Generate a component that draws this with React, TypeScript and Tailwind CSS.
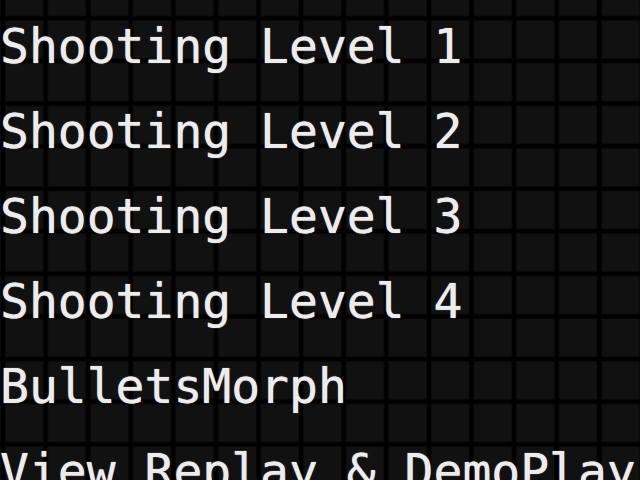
const ITEMS = [
  "Shooting Level 1",
  "Shooting Level 2",
  "Shooting Level 3",
  "Shooting Level 4",
  "BulletsMorph",
  "View Replay & DemoPlay",
];

export default function App() {
  return (
    <div className="w-[640px] h-[480px] overflow-hidden bg-[#111111] bg-[linear-gradient(to_right,transparent_0,#000_1.5px,#000_4.5px,transparent_6px),linear-gradient(to_bottom,transparent_0,#000_1.5px,#000_4.5px,transparent_6px)] bg-[size:42.6px_42.6px] bg-[position:0px_15.3px]">
      <ul className="flex flex-col pt-1 font-['DejaVu_Sans_Mono',monospace] text-[48px] leading-[85px] text-[#ececec] [text-shadow:0_0_1px_#ececec]">
        {ITEMS.map((item) => (
          <li key={item} className="whitespace-nowrap">
            {item}
          </li>
        ))}
      </ul>
    </div>
  );
}
